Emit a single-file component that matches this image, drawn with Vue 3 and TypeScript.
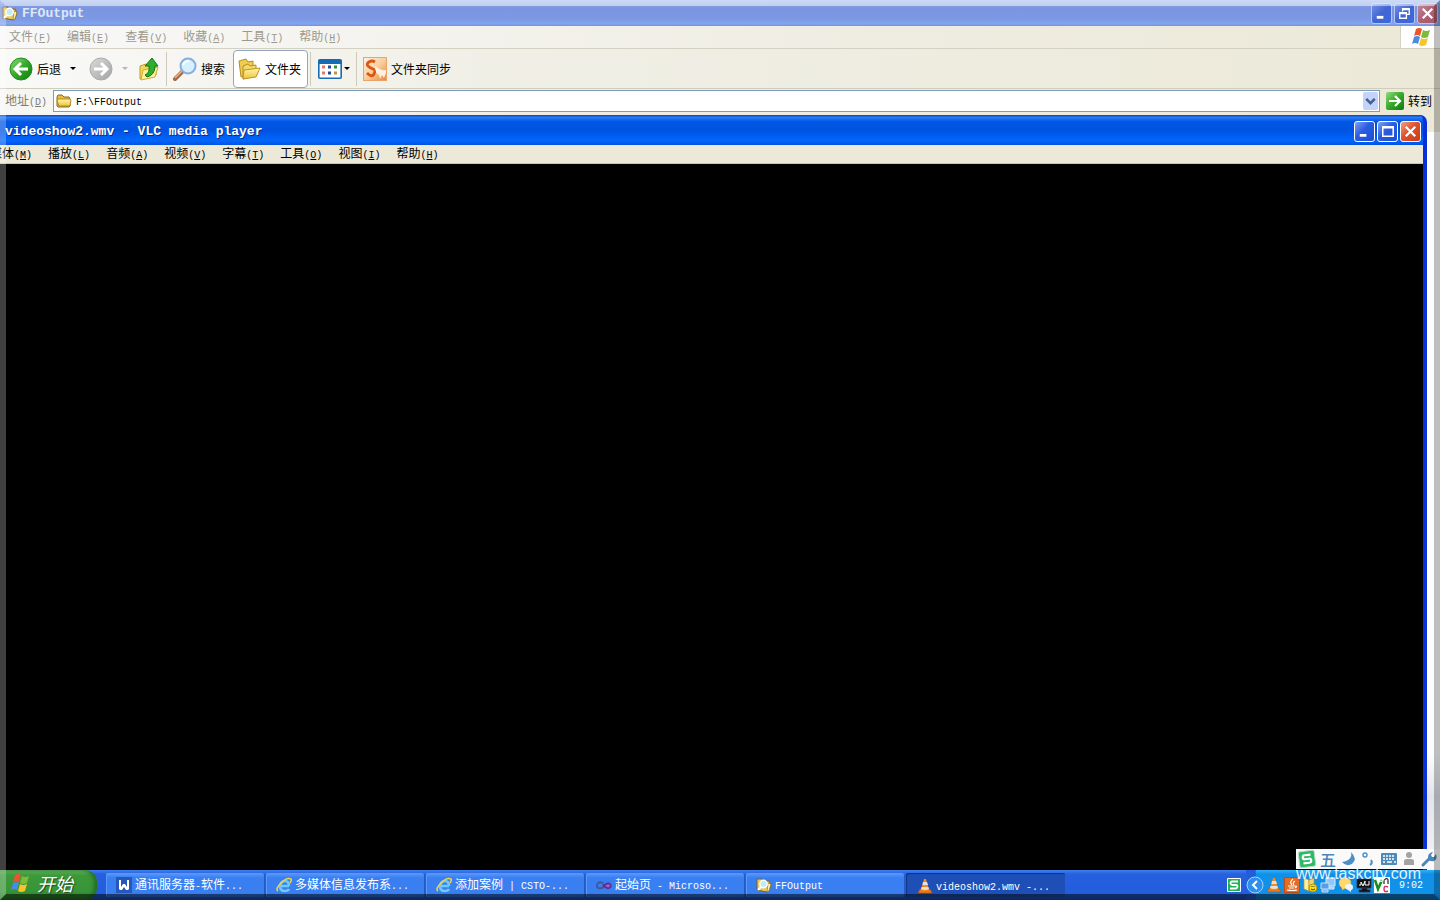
<script setup lang="ts">
import { h, ref } from 'vue'

interface MenuEntry {
  label: string
  key: string
}

const explorerMenu: MenuEntry[] = [
  { label: '文件', key: 'F' },
  { label: '编辑', key: 'E' },
  { label: '查看', key: 'V' },
  { label: '收藏', key: 'A' },
  { label: '工具', key: 'T' },
  { label: '帮助', key: 'H' },
]

const playerMenu: MenuEntry[] = [
  { label: '媒体', key: 'M' },
  { label: '播放', key: 'L' },
  { label: '音频', key: 'A' },
  { label: '视频', key: 'V' },
  { label: '字幕', key: 'T' },
  { label: '工具', key: 'O' },
  { label: '视图', key: 'I' },
  { label: '帮助', key: 'H' },
]

const tasks = [
  { icon: 'i-word', text: '通讯服务器-软件...', active: false },
  { icon: 'i-ie', text: '多媒体信息发布系...', active: false },
  { icon: 'i-ie', text: '添加案例 | CSTO-...', active: false },
  { icon: 'i-vs', text: '起始页 - Microso...', active: false },
  { icon: 'i-search-folder', text: 'FFOutput', active: false },
  { icon: 'i-cone', text: 'videoshow2.wmv -...', active: true },
]

const trayIcons = [
  { id: 'i-cone', name: 'VLC' },
  { id: 'i-java', name: 'Java' },
  { id: 'i-server', name: 'SQL Server' },
  { id: 'i-network', name: '网络' },
  { id: 'i-chat', name: '消息' },
  { id: 'i-monitor', name: '监视器' },
  { id: 'i-vnc', name: 'VNC' },
]

const address = ref('F:\\FFOutput')

// Half-width characters are set in a mono face, half as wide as the ideographs.
const Mixed = (props: { text: string }) =>
  (props.text.match(/[\x00-\x7f]+|[^\x00-\x7f]+/g) ?? []).map((run) =>
    h('span', { class: run.charCodeAt(0) < 128 ? 'half' : 'full' }, run),
  )
Mixed.props = ['text']
</script>

<template>
  <div class="desktop">
    <svg class="defs" aria-hidden="true">
      <defs>
        <linearGradient id="g-green" x1="0" y1="0" x2="1" y2="1">
          <stop offset="0" stop-color="#8fdc7c" /><stop offset=".5" stop-color="#35a928" /><stop offset="1" stop-color="#0c7a0c" />
        </linearGradient>
        <linearGradient id="g-grey" x1="0" y1="0" x2="1" y2="1">
          <stop offset="0" stop-color="#dcdcdc" /><stop offset="1" stop-color="#a2a2a2" />
        </linearGradient>
        <linearGradient id="g-fold" x1="0" y1="0" x2="0" y2="1">
          <stop offset="0" stop-color="#fff6a8" /><stop offset="1" stop-color="#efc53c" />
        </linearGradient>
        <linearGradient id="g-orange" x1="0" y1="0" x2="1" y2="1">
          <stop offset="0" stop-color="#fdf2e4" /><stop offset=".5" stop-color="#f9cf9e" /><stop offset="1" stop-color="#e98538" />
        </linearGradient>
        <symbol id="i-flag" viewBox="0 0 22 20">
          <path d="M6 2Q9 0 12 2L10 9Q7 7 4 9Z" fill="#e9562d" />
          <path d="M13 3Q16 5 20 3L18 10Q14 12 11 10Z" fill="#7dbb38" />
          <path d="M4 10Q7 8 10 10L8 17Q5 15 2 17Z" fill="#4c8be0" />
          <path d="M11 11Q14 13 18 11L16 18Q12 20 9 18Z" fill="#f6c52b" />
        </symbol>
        <symbol id="i-folder" viewBox="0 0 16 16">
          <path d="M1 4l1-2h4l2 2h5l1 2v7l-1 1H2l-1-1Z" fill="#e6bd42" stroke="#8b6b18" />
          <path d="M2 6h12l1 1-1 6H3L1 8Z" fill="url(#g-fold)" stroke="#a17c1c" stroke-width=".8" />
        </symbol>
        <symbol id="i-search-folder" viewBox="0 0 16 16">
          <path d="M1 2h5l1 2h6l1 2 1 1-2 7-2 1L1 13Z" fill="#edc95e" stroke="#80611d" />
          <path d="M12 6l3 1-2 7-2 1Z" fill="#fff2b0" stroke="#80611d" stroke-width=".6" />
          <circle cx="7.5" cy="7" r="3.7" fill="#bfeef2" stroke="#fff" stroke-width="1.4" />
          <path d="M5 10l-3 3" stroke="#fff" stroke-width="2" />
        </symbol>
        <symbol id="i-word" viewBox="0 0 16 16">
          <rect width="16" height="16" fill="#2558bc" />
          <path d="M3 3v9l1 1h2l2-3 2 3h2l1-1V3h-2v7L9 7H7l-2 3V3Z" fill="#fff" />
        </symbol>
        <symbol id="i-ie" viewBox="0 0 16 16">
          <path d="M13 9H5M13 9Q13 4 9 4T4 9q0 5 5 5 3 0 4-2" fill="none" stroke="#6ccbf8" stroke-width="2.6" />
          <path d="M2 14Q-1 12 5 6T15 2q1 1-1 4" fill="none" stroke="#f2cf48" stroke-width="1.6" />
        </symbol>
        <symbol id="i-vs" viewBox="0 0 16 16">
          <path d="M7 6Q2 4 1 8t5 3q2-1 4-4" fill="none" stroke="#3c5a9e" stroke-width="2" />
          <path d="M7 10q4-5 7-3 2 3-1 4-3 1-6-4" fill="#9b65c7" stroke="#5b318f" stroke-width="1.8" />
        </symbol>
        <symbol id="i-cone" viewBox="0 0 16 16">
          <path d="M3 11h10l2 4H1Z" fill="#ed7618" stroke="#a64e0c" stroke-width=".5" />
          <path d="M7 1h2l3 11q-4 2-8 0Z" fill="#f58a20" />
          <path d="M6 4h4l1 3H5.4ZM4.6 9h6.8l.6 2q-4 2-8 0Z" fill="#e6e0d8" />
        </symbol>
        <symbol id="i-java" viewBox="0 0 16 16">
          <rect x=".5" y=".5" width="15" height="15" fill="#e46c24" stroke="#bd4c14" />
          <path d="M9 2q-4 3-1 6M11 4q-3 2-1 4M4 9h7M11 9q3 0 0 2M5 11h5M3 13q5 1 10 0" fill="none" stroke="#fff" stroke-width="1.2" />
        </symbol>
        <symbol id="i-server" viewBox="0 0 16 16">
          <path d="M2 1l5 2v11l-5-2Z" fill="#fff0a1" stroke="#b7942e" stroke-width=".7" />
          <path d="M7 3l5-2v11l-5 2Z" fill="#f0d479" stroke="#b7942e" stroke-width=".7" />
          <circle cx="11" cy="11" r="4" fill="#ffe400" stroke="#917800" stroke-width=".7" />
          <path d="M10 9v1M12 9v1M9 12q2 2 4 0" fill="none" stroke="#333" />
        </symbol>
        <symbol id="i-network" viewBox="0 0 16 16">
          <path d="M6 1h9v8H6ZM9 10h5v2H9Z" fill="#8dc7fb" stroke="#d7edff" />
          <path d="M1 6h8v6H1ZM2 13h6v2H2Z" fill="#5b9be8" stroke="#c4e2fb" />
        </symbol>
        <symbol id="i-chat" viewBox="0 0 16 16">
          <path d="M1 6q0-5 6-5t6 5-5 5l-4 2v-2Q1 9 1 6Z" fill="#ffd968" stroke="#dfa83a" stroke-width=".5" />
          <path d="M7 10q0-3 4-3t4 3-2 3v2l-3-2q-3-1-3-3Z" fill="#e8f7ff" />
        </symbol>
        <symbol id="i-monitor" viewBox="0 0 16 16">
          <path d="M1 2h14v9H1ZM6 11h5v2h3v2H3v-2h3Z" fill="#111" stroke="#334" stroke-width=".8" />
          <path d="M3 8h2V5l2 4 2-5v4h4V4" fill="none" stroke="#fff" />
        </symbol>
        <symbol id="i-vnc" viewBox="0 0 16 16">
          <rect width="16" height="16" fill="#fff" />
          <path d="M1 3l3 9 4-9" fill="none" stroke="#178c20" stroke-width="2.5" />
          <path d="M10 7V3q4-3 4 0v4" fill="none" stroke="#333" stroke-width="1.3" />
          <path d="M14 10q-4-2-4 2t4 2" fill="none" stroke="#cf3154" stroke-width="1.4" />
        </symbol>
        <symbol id="i-sogou" viewBox="0 0 16 16">
          <rect x="1" y="1" width="14" height="14" rx="1" fill="#fff" />
          <rect x="2" y="2" width="12" height="12" fill="#20b355" />
          <path d="M12 4.500H6Q4.500 4.500 4.500 6t1.500 2h4q1.500 0 1.500 1.500t-1.500 2H4" fill="none" stroke="#fff" stroke-width="1.8" />
        </symbol>
      </defs>
    </svg>

    <section class="explorer">
      <header class="ex-title">
        <svg class="s16"><use href="#i-search-folder" /></svg>
        <h1>FFOutput</h1>
        <div class="controls">
          <button class="ctl" aria-label="最小化"><svg viewBox="0 0 20 20"><path d="M5 14h7" stroke="#fff" stroke-width="3" /></svg></button>
          <button class="ctl" aria-label="还原"><svg viewBox="0 0 20 20"><path d="M8 8V5h7v6h-3M8 6h7M5 9h7v6H5ZM5 10h7" fill="none" stroke="#fff" stroke-width="1.4" /></svg></button>
          <button class="ctl close" aria-label="关闭"><svg viewBox="0 0 20 20"><path d="M5 5l10 10M15 5L5 15" stroke="#fff" stroke-width="2.4" /></svg></button>
        </div>
      </header>

      <div class="menu-row">
        <nav class="menu ex-menu">
          <button v-for="m in explorerMenu" :key="m.label">{{ m.label }}<span class="half">(<u>{{ m.key }}</u>)</span></button>
        </nav>
        <div class="brand"><svg class="flag"><use href="#i-flag" /></svg></div>
      </div>

      <div class="toolbar">
        <button class="tool back">
          <svg class="s24" viewBox="0 0 24 24"><circle cx="12" cy="12" r="11" fill="url(#g-green)" stroke="#238a20" /><path d="M19 12H7M12 6l-6 6 6 6" fill="none" stroke="#fff" stroke-width="3" /></svg>
          <span>后退</span>
        </button>
        <button class="arrow" aria-label="后退列表"><i class="caret"></i></button>
        <button class="tool" aria-label="前进">
          <svg class="s24" viewBox="0 0 24 24"><circle cx="12" cy="12" r="11" fill="url(#g-grey)" stroke="#aaa" /><path d="M5 12h12M12 6l6 6-6 6" fill="none" stroke="#fff" stroke-width="3" /></svg>
        </button>
        <button class="arrow last" aria-label="前进列表"><i class="caret off"></i></button>
        <button class="tool up" aria-label="向上">
          <svg class="s24" viewBox="0 0 24 24"><path d="M3 9l6-2 2 2 8-1v10L5 22H3Z" fill="#f6d65a" stroke="#c39a29" /><path d="M6 13l15-3-3 10-14 3Z" fill="#fff29e" stroke="#d1aa3c" /><path d="M8 18q5-2 4-9H8l7-8 6 8h-3q0 9-8 11Z" fill="#2eae2d" stroke="#137517" /></svg>
        </button>
        <i class="sep"></i>
        <button class="tool find">
          <svg class="s24" viewBox="0 0 24 24"><path d="M10 14l-8 8" stroke="#a66642" stroke-width="4" stroke-linecap="round" /><path d="M9 14l-7 7" stroke="#ecb58b" stroke-width="1.5" /><circle cx="15" cy="9" r="7.500" fill="#d6f0ff" stroke="#85aee0" stroke-width="2" /><path d="M10 8q1-4 6-4" fill="none" stroke="#fff" stroke-width="2" /></svg>
          <span>搜索</span>
        </button>
        <button class="tool folders" aria-pressed="true">
          <svg class="s24" viewBox="0 0 24 24"><path d="M2 4l7-2 2 3 5-1v13l-12 3Z" fill="#f0cc51" stroke="#b58c21" /><path d="M6 9l5-2 2 2 6-1v11L6 22Z" fill="#f6da69" stroke="#b58c21" /><path d="M7 13l16-2-4 9-13 2Z" fill="url(#g-fold)" stroke="#bf9628" /></svg>
          <span>文件夹</span>
        </button>
        <i class="sep"></i>
        <button class="tool views" aria-label="查看方式">
          <svg class="s24" viewBox="0 0 24 20"><rect x=".8" y=".8" width="22.400" height="18.400" rx="1" fill="#fff" stroke="#176bb5" stroke-width="1.6" /><path d="M1 3h22" stroke="#176bb5" stroke-width="4" /><path d="M4 8h3M4 14h3" stroke="#df7a68" stroke-width="3" /><path d="M10 8h3M10 14h3" stroke="#2349a5" stroke-width="3" /><path d="M16 8h3" stroke="#29963a" stroke-width="3" /><path d="M16 14h3" stroke="#b99b30" stroke-width="3" /></svg>
          <i class="caret"></i>
        </button>
        <i class="sep"></i>
        <button class="tool sync">
          <svg class="s24" viewBox="0 0 24 24"><rect x=".5" y=".5" width="23" height="23" fill="url(#g-orange)" stroke="#e9a468" /><path d="M12 5Q9 3 6 5T5 9t5 3 1 5-7-1" fill="none" stroke="#dd5714" stroke-width="2.8" /><path d="M12 9q6 5 11 4v3l-2 5-2-3-2 4-1-4q-4-2-4-9Z" fill="#fff6ec" opacity=".9" /></svg>
          <span>文件夹同步</span>
        </button>
      </div>

      <div class="address">
        <label for="addr">地址<span class="half">(<u>D</u>)</span></label>
        <div class="combo">
          <svg class="s16"><use href="#i-folder" /></svg>
          <input id="addr" v-model="address" type="text" />
          <button class="drop" aria-label="展开"><svg viewBox="0 0 14 16"><path d="M3 6l4 4 4-4" fill="none" stroke="#42628f" stroke-width="2.4" /></svg></button>
        </div>
        <button class="go">
          <svg viewBox="0 0 18 18"><rect width="18" height="18" rx="2" fill="url(#g-green)" /><path d="M3 9h11M9 4l5 5-5 5" fill="none" stroke="#fff" stroke-width="2.2" /></svg>
          <span>转到</span>
        </button>
      </div>
      <div class="pane"></div>
    </section>

    <section class="player">
      <header class="pl-title">
        <h2>videoshow2.wmv - VLC media player</h2>
        <div class="controls">
          <button class="ctl" aria-label="最小化"><svg viewBox="0 0 20 20"><path d="M5 14h7" stroke="#fff" stroke-width="3" /></svg></button>
          <button class="ctl" aria-label="最大化"><svg viewBox="0 0 20 20"><path d="M5 5h11v10H5ZM5 6h11" fill="none" stroke="#fff" stroke-width="1.6" /></svg></button>
          <button class="ctl close" aria-label="关闭"><svg viewBox="0 0 20 20"><path d="M5 5l10 10M15 5L5 15" stroke="#fff" stroke-width="2.4" /></svg></button>
        </div>
      </header>
      <nav class="menu pl-menu">
        <button v-for="m in playerMenu" :key="m.label">{{ m.label }}<span class="half">(<u>{{ m.key }}</u>)</span></button>
      </nav>
      <div class="video"></div>
    </section>

    <footer class="taskbar">
      <button class="start"><svg class="flag"><use href="#i-flag" /></svg><span>开始</span></button>
      <div class="tasks">
        <button v-for="t in tasks" :key="t.text" class="task" :class="{ active: t.active }">
          <svg class="s16"><use :href="'#' + t.icon" /></svg>
          <span class="task-text"><Mixed :text="t.text" /></span>
        </button>
      </div>
      <svg class="s16 lang"><use href="#i-sogou" /></svg>
      <div class="tray">
        <button class="expand" aria-label="显示隐藏的图标"><svg viewBox="0 0 18 18"><circle cx="9" cy="9" r="8" fill="#2b8ff0" stroke="#9fd3ff" /><path d="M11 5L7 9l4 4" fill="none" stroke="#fff" stroke-width="2" /></svg></button>
        <svg v-for="i in trayIcons" :key="i.id" class="s16" role="img" :aria-label="i.name"><use :href="'#' + i.id" /></svg>
        <time class="half clock">9:02</time>
      </div>
    </footer>

    <div class="ime">
      <svg viewBox="0 0 20 20"><g transform="rotate(-7 10 10)"><rect x="2" y="2" width="16" height="16" rx="2" fill="#2fb869" stroke="#b7dfc6" /><path d="M14 6H8Q6 6 6 8t2 2h4q2 0 2 2t-2 2H6" fill="none" stroke="#fff" stroke-width="2.2" /></g></svg>
      <span class="wubi">五</span>
      <svg viewBox="0 0 20 20"><path d="M12 3q2 8-9 10 4 5 10 2 6-5-1-12Z" fill="#4b8fc5" /></svg>
      <svg viewBox="0 0 20 20"><circle cx="6" cy="6" r="2" fill="none" stroke="#4b8fc5" stroke-width="1.4" /><path d="M12 11q2 3-1 5" fill="none" stroke="#4b8fc5" stroke-width="2" /></svg>
      <svg viewBox="0 0 20 20"><rect x="2" y="4" width="16" height="12" rx="1" fill="#4c8bbb" /><path d="M4 7h12M4 10h12" stroke="#fff" stroke-width="1.6" stroke-dasharray="2 1" /><path d="M4 13h2m2 0h5m2 0h2" stroke="#fff" stroke-width="1.6" /></svg>
      <svg viewBox="0 0 20 20"><circle cx="10" cy="6" r="3" fill="#a3a3a3" /><path d="M5 16v-4q0-2 3-2h4q3 0 3 2v4Z" fill="#a3a3a3" /></svg>
      <svg viewBox="0 0 20 20"><path d="M4 16l7-7" stroke="#4b86b8" stroke-width="3" stroke-linecap="round" /><path d="M14 3l-2 3 1 2 2 0 2-3q2 5-2 7-3 1-5-1-2-3 0-6 2-2 4-2Z" fill="#4b86b8" /></svg>
    </div>
    <div class="site">www.taskcity.com</div>
    <div class="bevel"></div>
  </div>
</template>

<style>
body {
  margin: 0;
}
.half {
  font-family: 'Liberation Mono', monospace;
  font-size: 10px;
  white-space: pre;
}
</style>

<style scoped>
.desktop {
  position: relative;
  height: 100vh;
  overflow: hidden;
  display: flex;
  flex-direction: column;
  background: #000;
  color: #000;
  font: 12px/16px 'Noto Sans CJK SC', sans-serif;
}
.desktop * {
  box-sizing: border-box;
}
.defs {
  position: absolute;
  width: 0;
  height: 0;
}
button {
  padding: 0;
  border: 0;
  background: none;
  color: inherit;
  font: inherit;
  white-space: nowrap;
}
svg {
  display: block;
  flex: none;
}
h1,
h2 {
  margin: 0;
  flex: 1;
  font: bold 13px/16px 'Liberation Mono', monospace;
}
.s16 {
  width: 16px;
  height: 16px;
}
.s24 {
  width: 24px;
  height: 24px;
}
.flag {
  width: 22px;
  height: 20px;
}

.explorer {
  flex: 1;
  display: flex;
  flex-direction: column;
  background: #fff;
}
.ex-title {
  height: 26px;
  padding: 0 2px;
  display: flex;
  align-items: center;
  gap: 4px;
  background: linear-gradient(#9db8ee, #7b96df 30%, #7d98e3 70%, #82a5ee 92%, #7790d6);
  color: #dfe7fb;
}
.ex-title h1 {
  padding-top: 2px;
}
.controls {
  display: flex;
  gap: 2px;
}
.ctl {
  width: 21px;
  height: 21px;
  border: 1px solid #fff;
  border-radius: 3px;
  background: linear-gradient(135deg, #7ea2f4, #2a5be0 45%, #1c4ed4);
}
.ctl.close {
  background: linear-gradient(135deg, #f0a288, #e2502c 45%, #c63b16);
}
.ctl svg {
  width: 19px;
  height: 19px;
}
.ex-title .ctl {
  border-color: #b3c6f4;
  background: linear-gradient(135deg, #7391e5, #4166d4 50%, #3f66da);
}
.ex-title .ctl.close {
  background: linear-gradient(135deg, #b98aa6, #ad6273 50%, #a85668);
}
.menu-row {
  height: 23px;
  display: flex;
  border-bottom: 1px solid #d4d1c2;
  background: linear-gradient(90deg, #f8f8f8, #efede2 60%, #ece9d8);
  color: #9c998c;
}
.menu {
  display: flex;
  align-items: center;
  gap: 16px;
}
.ex-menu {
  flex: 1;
  padding-left: 9px;
}
.brand {
  width: 40px;
  display: flex;
  align-items: center;
  justify-content: center;
  border-left: 1px solid #d4d1c2;
  background: #fff;
}
.toolbar {
  height: 40px;
  padding: 1px 9px;
  display: flex;
  align-items: center;
  border-bottom: 1px solid #d0cdbd;
  background: linear-gradient(90deg, #f9f9f8, #f0efe6 35%, #ece9d8);
}
.tool {
  height: 38px;
  display: flex;
  align-items: center;
  gap: 4px;
}
.arrow {
  width: 28px;
  height: 38px;
  padding-left: 9px;
  display: flex;
  align-items: center;
}
.arrow.last {
  width: 24px;
}
.caret {
  border: 3px solid transparent;
  border-top-color: #000;
  border-bottom: 0;
}
.caret.off {
  border-top-color: #b9b6aa;
}
.up {
  margin-right: 5px;
}
.sep {
  width: 1px;
  height: 34px;
  background: #cdcabb;
}
.find {
  padding: 0 8px 0 6px;
}
.folders {
  padding: 0 6px 0 3px;
  margin-right: 2px;
  border: 1px solid #93a5bf;
  border-radius: 4px;
  background: #fff;
}
.views {
  padding: 0 6px 0 7px;
  gap: 2px;
}
.sync {
  padding-left: 6px;
}
.address {
  height: 43px;
  padding: 1px 8px 20px 5px;
  display: flex;
  align-items: center;
  gap: 6px;
  background: linear-gradient(90deg, #f6f6f4, #f0eee4 35%, #ece9d8);
}
.address label {
  color: #7d7b72;
}
.combo {
  flex: 1;
  height: 22px;
  padding: 0 1px 0 2px;
  display: flex;
  align-items: center;
  gap: 4px;
  border: 1px solid #7f9db9;
  background: #fff;
}
.combo input {
  flex: 1;
  min-width: 0;
  padding: 3px 0 0;
  border: 0;
  outline: 0;
  background: none;
  color: #000;
  font: 10px/16px 'Liberation Mono', monospace;
}
.drop {
  width: 15px;
  height: 18px;
  border-radius: 2px;
  background: #c3d3fb;
}
.drop svg {
  width: 15px;
  height: 18px;
}
.go {
  display: flex;
  align-items: center;
  gap: 4px;
}
.go svg {
  width: 18px;
  height: 18px;
}
.pane {
  flex: 1;
  background: linear-gradient(#fff 84%, #e2e4ec 90%, #f4f4f8);
}

.player {
  position: absolute;
  top: 115px;
  right: 13px;
  bottom: 30px;
  left: -12px;
  display: flex;
  flex-direction: column;
  border-right: 4px solid #0831d9;
  border-radius: 0 7px 0 0;
  overflow: hidden;
  background: #0058ee;
}
.pl-title {
  height: 30px;
  padding: 2px 2px 0 17px;
  display: flex;
  align-items: center;
  background: linear-gradient(#0a41b8, #2a7bf6 8%, #0058e6 22%, #0053e0 50%, #0066fd 85%, #0052de);
  color: #fff;
  text-shadow: 1px 1px #0a2a80;
}
.pl-title h2 {
  padding-top: 2px;
}
.pl-menu {
  height: 19px;
  padding-left: 2px;
  border-bottom: 1px solid #c8c5b4;
  background: #ece9d8;
}
.video {
  flex: 1;
  background: #000;
}

.taskbar {
  position: relative;
  height: 30px;
  display: flex;
  align-items: center;
  background: linear-gradient(#3f80ee, #2660de 14%, #245ddb 75%, #1d4fc4);
  color: #fff;
}
.start {
  width: 97px;
  height: 30px;
  padding: 0 0 4px 9px;
  display: flex;
  align-items: center;
  gap: 6px;
  border-radius: 0 12px 12px 0;
  background: linear-gradient(#69b565, #3c9a3b 18%, #379437 70%, #2b7c2b);
  box-shadow: inset -3px 0 4px #236b23;
  font-size: 18px;
  font-style: italic;
  line-height: 24px;
  text-shadow: 1px 1px 1px #1c4a1c;
}
.tasks {
  flex: 1;
  padding-left: 9px;
  display: flex;
  gap: 1px;
}
.task {
  width: 159px;
  height: 24px;
  padding-left: 10px;
  display: flex;
  align-items: center;
  gap: 3px;
  border-radius: 2px;
  background: linear-gradient(#5a9bfb, #3a7ff2 20%, #3a7ff0 80%, #2f6fe0);
  box-shadow: inset -1px 0 #2459c8, inset 1px 0 #5c98f8;
}
.task.active {
  padding: 2px 0 0 11px;
  background: #1e4fb6;
  box-shadow: inset 1px 1px 1px #12357f;
}
.lang {
  margin-right: 4px;
}
.tray {
  height: 30px;
  padding-right: 17px;
  display: flex;
  align-items: center;
  gap: 2px;
  background: linear-gradient(90deg, #245ddb 9px, #0a4da8 9px, transparent 10px), linear-gradient(#2fb0f8, #1290e8 14%, #1191e9 75%, #0e7cd0);
}
.expand svg {
  width: 18px;
  height: 18px;
}
.clock {
  padding: 2px 0 0 7px;
}

.ime {
  position: absolute;
  right: 0;
  bottom: 31px;
  width: 144px;
  height: 20px;
  padding-left: 1px;
  display: flex;
  align-items: center;
  background: #fafafa;
}
.ime svg {
  width: 20px;
  height: 20px;
}
.wubi {
  width: 22px;
  color: #4b86b8;
  font-size: 16px;
  font-weight: 500;
  line-height: 18px;
  text-align: center;
}
.site {
  position: absolute;
  right: 19px;
  bottom: 17px;
  color: rgba(255, 255, 255, 0.9);
  font: 16px/18px 'Liberation Sans', sans-serif;
}
.bevel {
  position: absolute;
  inset: 0;
  border: 6px solid;
  border-color: rgba(255, 255, 255, 0.5) rgba(0, 0, 0, 0.25) rgba(0, 0, 0, 0.5) rgba(255, 255, 255, 0.25);
  pointer-events: none;
}
</style>
